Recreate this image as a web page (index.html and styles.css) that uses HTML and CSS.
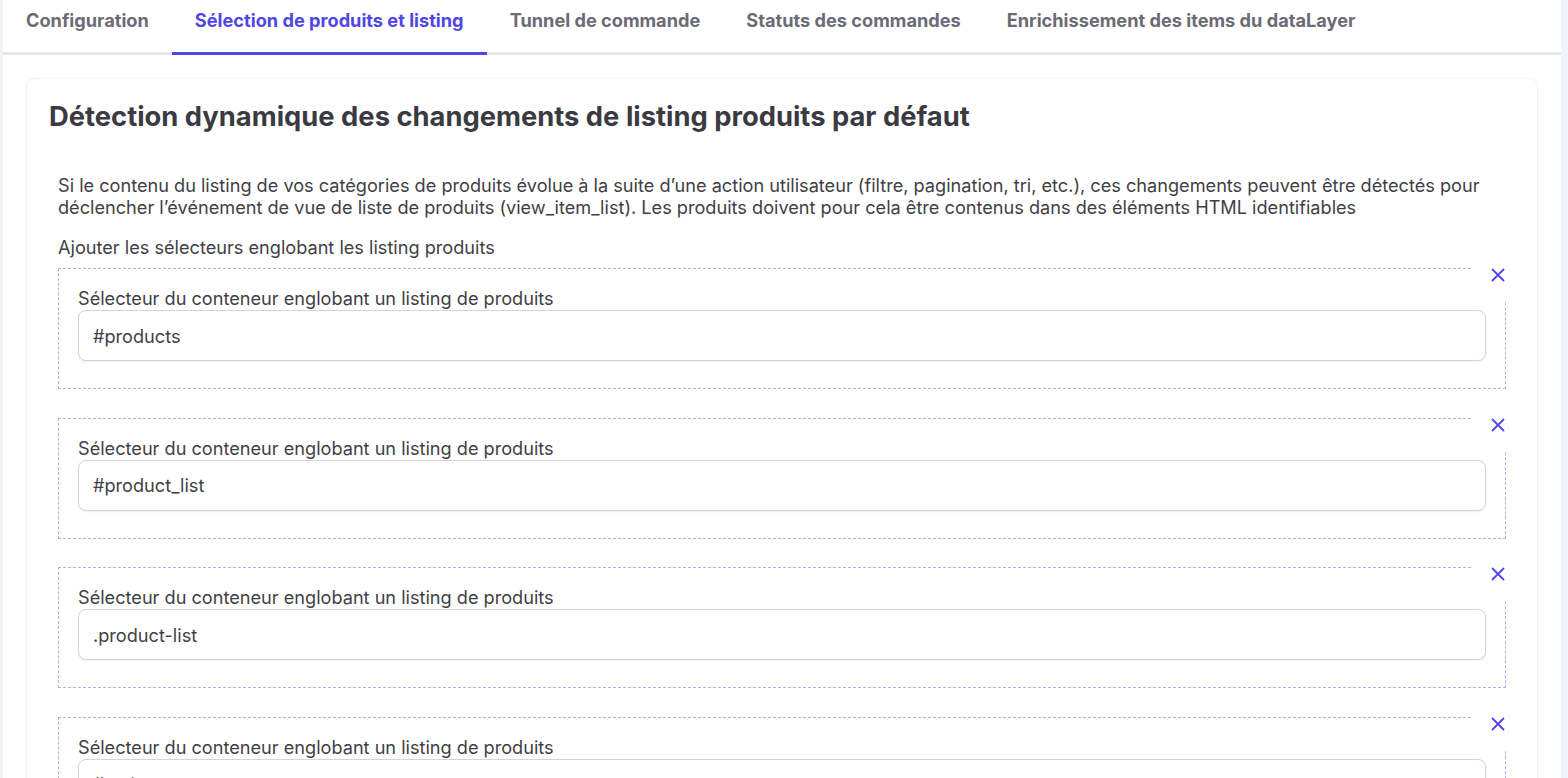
FILE: index.html
```html
<!DOCTYPE html>
<html lang="fr">
<head>
<meta charset="utf-8">
<title>Sélection de produits et listing</title>
<link rel="stylesheet" href="styles.css">
</head>
<body>
<div class="app">
  <nav class="tabs">
    <a class="tab">Configuration</a>
    <a class="tab active">Sélection de produits et listing</a>
    <a class="tab">Tunnel de commande</a>
    <a class="tab">Statuts des commandes</a>
    <a class="tab">Enrichissement des items du dataLayer</a>
  </nav>
  <main class="content">
    <section class="card">
      <h1 class="card-title">Détection dynamique des changements de listing produits par défaut</h1>
      <div class="card-body">
        <p class="intro">Si le contenu du listing de vos catégories de produits évolue à la suite d’une action utilisateur (filtre, pagination, tri, etc.), ces changements peuvent être détectés pour déclencher l’événement de vue de liste de produits (view_item_list). Les produits doivent pour cela être contenus dans des éléments HTML identifiables</p>
        <p class="list-label">Ajouter les sélecteurs englobant les listing produits</p>
        <div class="selectors">
          <div class="sel-box">
            <button class="remove" type="button" aria-label="Supprimer"><svg viewBox="0 0 14 14" width="14" height="14"><path d="M1.5 1.5L12.5 12.5M12.5 1.5L1.5 12.5" stroke="#4f46e5" stroke-width="1.8" fill="none" stroke-linecap="round"/></svg></button>
            <label class="sel-label">Sélecteur du conteneur englobant un listing de produits</label>
            <input class="sel-input" type="text" value="#products">
          </div>
          <div class="sel-box">
            <button class="remove" type="button" aria-label="Supprimer"><svg viewBox="0 0 14 14" width="14" height="14"><path d="M1.5 1.5L12.5 12.5M12.5 1.5L1.5 12.5" stroke="#4f46e5" stroke-width="1.8" fill="none" stroke-linecap="round"/></svg></button>
            <label class="sel-label">Sélecteur du conteneur englobant un listing de produits</label>
            <input class="sel-input" type="text" value="#product_list">
          </div>
          <div class="sel-box">
            <button class="remove" type="button" aria-label="Supprimer"><svg viewBox="0 0 14 14" width="14" height="14"><path d="M1.5 1.5L12.5 12.5M12.5 1.5L1.5 12.5" stroke="#4f46e5" stroke-width="1.8" fill="none" stroke-linecap="round"/></svg></button>
            <label class="sel-label">Sélecteur du conteneur englobant un listing de produits</label>
            <input class="sel-input" type="text" value=".product-list">
          </div>
          <div class="sel-box">
            <button class="remove" type="button" aria-label="Supprimer"><svg viewBox="0 0 14 14" width="14" height="14"><path d="M1.5 1.5L12.5 12.5M12.5 1.5L1.5 12.5" stroke="#4f46e5" stroke-width="1.8" fill="none" stroke-linecap="round"/></svg></button>
            <label class="sel-label">Sélecteur du conteneur englobant un listing de produits</label>
            <input class="sel-input" type="text" value="#main">
          </div>
        </div>
      </div>
    </section>
  </main>
</div>
</body>
</html>
```

FILE: styles.css
```css
* { box-sizing: border-box; }
html, body { margin: 0; padding: 0; }
body {
  background: #f1f3f8;
  font-family: Inter, "Noto Sans", "Liberation Sans", sans-serif;
  color: #3f3f46;
  overflow: hidden;
}
.app {
  margin: 0 7px 0 3px;
  background: #ffffff;
  min-height: 100vh;
}
.tabs {
  display: flex;
  border-bottom: 3px solid #e6e7eb;
}
.tab {
  display: block;
  padding: 8px 23px 20px;
  line-height: 24px;
  font-size: 18.2px;
  font-weight: 700;
  color: #6b6b76;
  border-bottom: 3px solid transparent;
  margin-bottom: -3px;
  white-space: nowrap;
  cursor: pointer;
}
.tab.active {
  color: #4f46e5;
  border-bottom-color: #4f46e5;
}
.content {
  padding: 23px;
}
.card {
  background: #ffffff;
  border: 1px solid #f2f3f5;
  border-radius: 8px;
  box-shadow: 0 1px 3px rgba(0, 0, 0, 0.03);
}
.card-title {
  margin: 0;
  padding: 22px 22px 0;
  font-size: 27.35px;
  line-height: 32px;
  font-weight: 700;
  color: #3a3a42;
}
.card-body {
  padding: 41px 31px 32px;
}
.intro {
  margin: 0;
  font-size: 18.15px;
  line-height: 22px;
}
.list-label {
  margin: 18px 0 10px;
  font-size: 18.15px;
  line-height: 22px;
}
.selectors {
  display: flex;
  flex-direction: column;
  gap: 28.5px;
}
.sel-box {
  position: relative;
  border: 1px dashed #b3adf7;
  padding: 17px 19px 27px;
}
.sel-label {
  display: block;
  font-size: 18.15px;
  line-height: 24px;
  color: #3f3f46;
}
.sel-input {
  display: block;
  width: 100%;
  height: 51px;
  padding: 0 14px;
  border: 1px solid #d4d4d8;
  border-radius: 8px;
  box-shadow: 0 1px 2px rgba(0, 0, 0, 0.07);
  font-family: inherit;
  font-size: 18.15px;
  color: #3f3f46;
  background: #fff;
  outline: none;
}
.remove {
  position: absolute;
  top: -20px;
  right: -19px;
  width: 52px;
  height: 52px;
  padding: 0;
  border: 0;
  background: #ffffff;
  display: flex;
  align-items: center;
  justify-content: center;
  cursor: pointer;
}
.remove svg { display: block; }
```
